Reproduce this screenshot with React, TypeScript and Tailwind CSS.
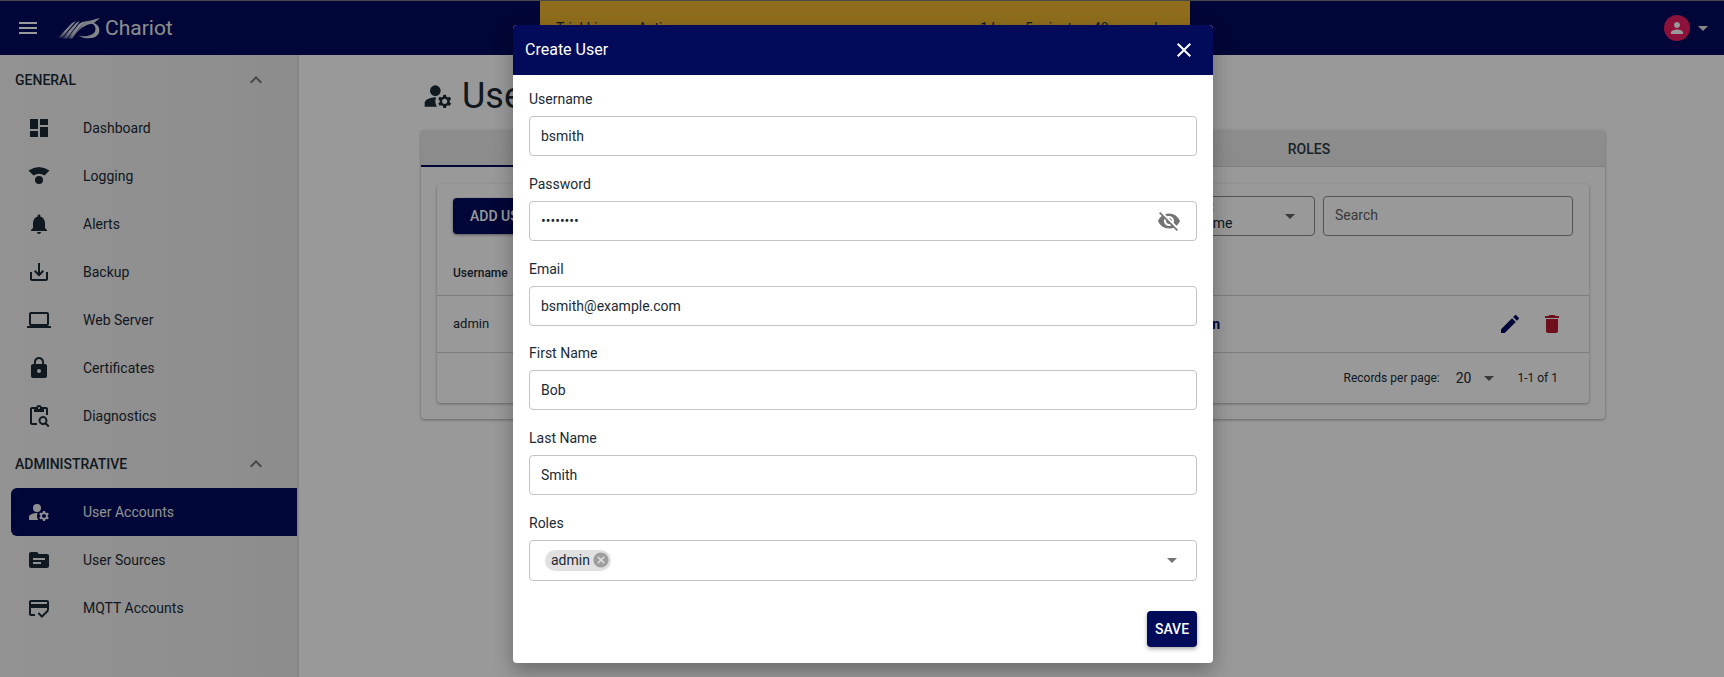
import React from "react";

const P = {
  menu: "M3 18h18v-2H3v2zm0-5h18v-2H3v2zm0-7v2h18V6H3z",
  less: "M12 8l-6 6 1.41 1.41L12 10.83l4.59 4.58L18 14z",
  dashboard: "M3 13h8V3H3v10zm0 8h8v-6H3v6zm10 0h8V11h-8v10zm0-18v6h8V3h-8z",
  logging: "M1.5 6.5Q12 -0.5 22.500 6.500L17.500 11.500Q12 8 6.500 11.500ZM12 12a4 4 0 1 0 0 8a4 4 0 1 0 0-8z",
  bell: "M12 22c1.1 0 2-.9 2-2h-4c0 1.1.89 2 2 2zm6-6v-5c0-3.07-1.64-5.64-4.5-6.32V4c0-.83-.67-1.5-1.5-1.500s-1.500.67-1.500 1.500v.68C7.630 5.360 6 7.920 6 11v5l-2 2v1h16v-1l-2-2z",
  backup: "M19 12v7H5v-7H3v7c0 1.100.9 2 2 2h14c1.100 0 2-.9 2-2v-7h-2zm-6 .67l2.590-2.580L17 11.500l-5 5-5-5 1.410-1.410L11 12.670V3h2z",
  laptop: "M20 18c1.100 0 1.990-.9 1.990-2L22 6c0-1.100-.9-2-2-2H4c-1.100 0-2 .9-2 2v10c0 1.100.9 2 2 2H0v2h24v-2h-4zM4 6h16v10H4V6z",
  lock: "M18 8h-1V6c0-2.760-2.240-5-5-5S7 3.240 7 6v2H6c-1.100 0-2 .9-2 2v10c0 1.100.9 2 2 2h12c1.100 0 2-.9 2-2V10c0-1.100-.9-2-2-2zm-6 9c-1.100 0-2-.9-2-2s.9-2 2-2 2 .9 2 2-.9 2-2 2zm3.100-9H8.900V6c0-1.710 1.390-3.100 3.100-3.100 1.710 0 3.100 1.390 3.100 3.100v2z",
  diag: "M5 3h4.200C9.600 1.800 10.700 1 12 1s2.400.8 2.800 2H19c1.100 0 2 .9 2 2v6h-2V5h-2v3H7V5H5v14h5v2H5c-1.100 0-2-.9-2-2V5c0-1.100.9-2 2-2zm7 0a1 1 0 1 0 0 2a1 1 0 0 0 0-2zM16 12a4.500 4.500 0 0 1 3.700 7l2.800 2.800-1.400 1.400-2.800-2.800A4.500 4.500 0 1 1 16 12zm0 2a2.500 2.500 0 1 0 0 5a2.500 2.500 0 0 0 0-5z",
  accountA: "M10.670 13.020c-.22-.01-.44-.02-.67-.02-2.420 0-4.680.67-6.610 1.820-.88.52-1.390 1.500-1.390 2.530V20h9.260c-.79-1.130-1.260-2.510-1.260-4 0-1.070.25-2.070.67-2.980zM10 4a4 4 0 1 0 0 8a4 4 0 1 0 0-8z",
  accountB: "M20.750 16c0-.22-.03-.42-.06-.63l1.140-1.010-1-1.730-1.450.49c-.32-.27-.68-.48-1.080-.63L18 11h-2l-.3 1.490c-.4.15-.76.36-1.080.63l-1.450-.49-1 1.730 1.140 1.010c-.03.21-.06.41-.06.63s.03.42.06.63l-1.140 1.010 1 1.730 1.450-.49c.32.27.68.48 1.080.63L16 21h2l.3-1.490c.4-.15.76-.36 1.080-.63l1.450.49 1-1.730-1.140-1.010c.03-.21.06-.41.06-.63zM17 18c-1.100 0-2-.9-2-2s.9-2 2-2 2 .9 2 2-.9 2-2 2z",
  source: "M20 6h-8l-2-2H4c-1.100 0-1.990.9-1.990 2L2 18c0 1.100.9 2 2 2h16c1.100 0 2-.9 2-2V8c0-1.100-.9-2-2-2zm-6 10H6v-2h8v2zm4-4H6v-2h12v2z",
  score: "M20 4H4c-1.110 0-2 .89-2 2v12c0 1.110.89 2 2 2h4v-2H4v-6h16v2h2V6c0-1.110-.89-2-2-2zm0 4H4V6h16v2zm-5.070 11.170l-2.830-2.830-1.410 1.410L14.930 22 22 14.930l-1.410-1.410-5.660 5.650z",
  person: "M12 12c2.210 0 4-1.790 4-4s-1.790-4-4-4-4 1.790-4 4 1.790 4 4 4zm0 2c-2.670 0-8 1.340-8 4v2h16v-2c0-2.660-5.330-4-8-4z",
  close: "M19 6.410L17.590 5 12 10.590 6.410 5 5 6.410 10.590 12 5 17.590 6.410 19 12 13.410 17.590 19 19 17.590 13.410 12z",
  eyeOff: "M12 7c2.760 0 5 2.240 5 5 0 .65-.13 1.260-.36 1.830l2.920 2.920c1.510-1.260 2.700-2.890 3.430-4.750-1.730-4.390-6-7.500-11-7.500-1.400 0-2.740.25-3.980.7l2.160 2.160C10.740 7.130 11.350 7 12 7zM2 4.270l2.280 2.280.46.46C3.080 8.300 1.780 10.020 1 12c1.730 4.390 6 7.500 11 7.500 1.550 0 3.030-.3 4.380-.84l.42.42L19.730 22 21 20.730 3.270 3 2 4.270zM7.530 9.800l1.550 1.550c-.05.21-.08.43-.08.65 0 1.660 1.340 3 3 3 .22 0 .44-.03.65-.08l1.550 1.550c-.67.33-1.410.53-2.200.53-2.760 0-5-2.240-5-5 0-.79.2-1.530.53-2.200zm4.310-.78l3.150 3.150.02-.16c0-1.660-1.340-3-3-3l-.17.01z",
  cancel: "M12 2C6.470 2 2 6.470 2 12s4.470 10 10 10 10-4.470 10-10S17.530 2 12 2zm5 13.590L15.590 17 12 13.410 8.410 17 7 15.590 10.590 12 7 8.410 8.410 7 12 10.590 15.590 7 17 8.410 13.410 12 17 15.590z",
  edit: "M3 17.250V21h3.750L17.810 9.940l-3.750-3.750L3 17.250zM20.710 7.040c.39-.39.39-1.020 0-1.410l-2.340-2.340c-.39-.39-1.020-.39-1.410 0l-1.830 1.830 3.750 3.750 1.830-1.830z",
  del: "M6 19c0 1.100.9 2 2 2h8c1.100 0 2-.9 2-2V7H6v12zM19 4h-3.500l-1-1h-5l-1 1H5v2h14V4z",
  drop: "M7 10l5 5 5-5z",
};

function Icon({ d, className }: { d: string | string[]; className?: string }) {
  const list = Array.isArray(d) ? d : [d];
  return (
    <svg viewBox="0 0 24 24" fill="currentColor" className={className}>
      {list.map((x) => (
        <path key={x} d={x} />
      ))}
    </svg>
  );
}

function Logo() {
  return (
    <svg viewBox="0 0 42 21" className="h-[21px] w-[42px]">
      <defs>
        <linearGradient id="lg" x1="0" x2="1" y1="0" y2="0">
          <stop offset="0" stopColor="#ffffff" stopOpacity="0.1" />
          <stop offset="0.4" stopColor="#ffffff" stopOpacity="0.8" />
          <stop offset="1" stopColor="#ffffff" stopOpacity="0.9" />
        </linearGradient>
      </defs>
      <g fill="url(#lg)">
        <path d="M0 19.500 L14 5 L18 3 L4 19.500Z" />
        <path d="M4 20.500 L18 5 L22 3 L8.500 20.500Z" />
        <path d="M9 20.500 L21 6 L25 4 L14 20.500Z" />
        <path d="M14 20.500 C19 15 22 10 29 7 C33 5.500 35 6 36 7 C38 9 38 13 36 15 C33 18 27 19 20 17.500 C25 20.500 31 21 36 19.500 C41 17.500 42 13 41 10 C40 7 38 6 36 5 L42 0 C35 2 30 3 24 4 C20 7 18 14 14 20.500Z" />
      </g>
    </svg>
  );
}

const general = [
  ["Dashboard", P.dashboard],
  ["Logging", P.logging],
  ["Alerts", P.bell],
  ["Backup", P.backup],
  ["Web Server", P.laptop],
  ["Certificates", P.lock],
  ["Diagnostics", P.diag],
] as const;

const admin = [
  ["User Accounts", [P.accountA, P.accountB], true],
  ["User Sources", P.source, false],
  ["MQTT Accounts", P.score, false],
] as const;

function SectionHead({ label }: { label: string }) {
  return (
    <div className="flex h-12 items-center justify-between pl-[15px] pr-[29px] text-sm font-medium text-[#1a2a35]">
      <span>{label}</span>
      <Icon d={P.less} className="h-6 w-6 text-[#757575]" />
    </div>
  );
}

function NavItem({ label, d, active }: { label: string; d: string | readonly string[]; active?: boolean }) {
  return (
    <div
      className={
        "ml-[11px] flex h-12 items-center rounded-l-md pl-4 text-sm " +
        (active ? "bg-[#000a5c] text-[#f0f0f0]" : "text-[#1a2a35]")
      }
    >
      <Icon d={d as string[]} className="h-6 w-6 shrink-0" />
      <span className="ml-[32px]">{label}</span>
    </div>
  );
}

function Field({ label, value, type, children }: { label: string; value: string; type?: string; children?: React.ReactNode }) {
  return (
    <div className="flex flex-col">
      <label className="mb-[7px] h-5 text-sm leading-5 text-[#1a2a35]">{label}</label>
      <div className="flex h-10 items-center rounded border border-[#c4c4c4] pl-[11px] pr-[15px]">
        <input
          readOnly
          type={type ?? "text"}
          value={value}
          className="min-w-0 flex-1 bg-transparent text-sm text-[#1a2a35] outline-none"
        />
        {children}
      </div>
    </div>
  );
}

export default function App() {
  return (
    <div className="relative flex h-screen w-full flex-col overflow-hidden bg-white font-['Roboto',sans-serif] text-[#1a2a35]">
      {/* top bar */}
      <header className="relative flex h-[55px] shrink-0 items-center justify-between border-t border-[#7a7a7a] bg-[#000a5c] pl-4 pr-[9px] text-white">
        <div className="flex items-center">
          <Icon d={P.menu} className="h-6 w-6" />
          <div className="ml-[18px]">
            <Logo />
          </div>
          <span className="ml-[5px] text-[21px] leading-none text-[#ececec]">Chariot</span>
        </div>
        <div className="flex items-center">
          <div className="flex h-[26px] w-[26px] items-center justify-center rounded-full bg-[#e91e63]">
            <Icon d={P.person} className="h-[18px] w-[18px]" />
          </div>
          <Icon d={P.drop} className="ml-[1px] h-6 w-6 text-[#e0e0e0]" />
        </div>
        <div className="absolute left-[540px] top-0 flex h-[52px] w-[650px] justify-between rounded-b bg-[#eeb62f] pl-4 pr-[25px] pt-[17px] text-sm text-[#1a2a35]">
          <span>Trial License Active</span>
          <span>1 hour, 5 minutes, 48 seconds</span>
        </div>
      </header>

      <div className="flex min-h-0 flex-1">
        {/* sidebar */}
        <aside className="w-[299px] shrink-0 border-r-2 border-[#dedede] bg-linear-to-r from-[#f5f5f5] to-[#ebebeb] pt-[1px]">
          <SectionHead label="GENERAL" />
          {general.map(([l, d]) => (
            <NavItem key={l} label={l} d={d} />
          ))}
          <SectionHead label="ADMINISTRATIVE" />
          {admin.map(([l, d, a]) => (
            <NavItem key={l} label={l} d={d} active={a} />
          ))}
        </aside>

        {/* main */}
        <main className="min-w-0 flex-1 pl-[122px] pr-[119px]">
          <div className="flex h-[75px] items-center pl-[1px] pt-[6px]">
            <Icon d={[P.accountA, P.accountB]} className="h-8 w-8" />
            <h1 className="ml-[8px] text-[36px] font-normal leading-none">User Accounts</h1>
          </div>

          <section className="rounded bg-white shadow-[0_1px_3px_rgba(0,0,0,0.35)]">
            <div className="flex h-[37px] rounded-t bg-linear-to-b from-[#ececec] to-[#e8e8e8] text-sm font-medium">
              <div className="flex flex-1 items-center justify-center border-b-2 border-[#000a5c]">USERS</div>
              <div className="flex flex-1 items-center justify-center border-b border-[#d8d8d8] pt-[1px] text-[#2c3a42]">ROLES</div>
            </div>

            <div className="p-4 pt-[17px]">
              <div className="rounded bg-white shadow-[0_1px_3px_rgba(0,0,0,0.35)]">
                <div className="flex items-start px-4 pt-[12px]">
                  <button className="mt-[2px] h-9 rounded bg-[#000a5c] px-[17px] text-sm font-medium text-white shadow-[0_1px_3px_rgba(0,0,0,0.4)]">
                    ADD USER
                  </button>
                  <div className="ml-auto flex gap-2">
                    <div className="relative h-[40px] w-[157px] rounded border border-[#8a8a8a] pl-[10px] text-sm">
                      <div className="pt-[2px] text-xs leading-4 text-[#555]">Filter by:</div>
                      <div className="-mt-[2px] leading-5">Username</div>
                      <Icon d={P.drop} className="absolute right-[12px] top-[7px] h-6 w-6 text-[#616161]" />
                    </div>
                    <input
                      readOnly
                      placeholder="Search"
                      className="h-[40px] w-[250px] rounded border border-[#8a8a8a] bg-transparent px-[11px] pb-[3px] text-sm outline-none placeholder:text-[#616161]"
                    />
                  </div>
                </div>

                <div className="mt-[21px] flex h-[39px] items-center border-b border-[#d0d0d0] px-4 pb-[6px] text-xs font-medium">
                  <span className="w-[728px]">Username</span>
                  <span>Roles</span>
                </div>
                <div className="flex h-[57px] items-center border-b border-[#d0d0d0] pl-4 pr-[25px] text-[13px]">
                  <span className="w-[728px]">admin</span>
                  <span className="text-sm font-bold text-[#000a5c]">admin</span>
                  <Icon d={P.edit} className="ml-auto h-6 w-6 text-[#000a5c]" />
                  <Icon d={P.del} className="ml-[18px] h-6 w-6 text-[#b71c2e]" />
                </div>
                <div className="flex h-[50px] items-center justify-end pr-[31px] text-xs">
                  <span>Records per page:</span>
                  <span className="ml-4 text-sm">20</span>
                  <Icon d={P.drop} className="ml-[6px] h-6 w-6 text-[#616161]" />
                  <span className="ml-[16px]">1-1 of 1</span>
                </div>
              </div>
            </div>
          </section>
        </main>
      </div>

      {/* backdrop */}
      <div className="absolute inset-0 bg-black/40" />

      {/* dialog */}
      <div className="absolute left-[513px] top-[25px] flex h-[638px] w-[700px] flex-col overflow-hidden rounded bg-white shadow-[0_8px_20px_rgba(0,0,0,0.3)]">
        <div className="flex h-[50px] shrink-0 items-center justify-between bg-[#020a5a] pl-3 pr-[17px] text-white">
          <span className="text-base">Create User</span>
          <Icon d={P.close} className="h-6 w-6" />
        </div>
        <div className="flex flex-1 flex-col gap-[17.8px] px-4 pt-[14px]">
          <Field label="Username" value="bsmith" />
          <Field label="Password" value="password" type="password">
            <Icon d={P.eyeOff} className="h-6 w-6 text-[#757575]" />
          </Field>
          <Field label="Email" value="bsmith@example.com" />
          <Field label="First Name" value="Bob" />
          <Field label="Last Name" value="Smith" />
          <div className="flex flex-col">
            <label className="mb-[7px] h-5 text-sm leading-5 text-[#1a2a35]">Roles</label>
            <div className="flex h-[41px] items-center justify-between rounded border border-[#c4c4c4] pl-[15px] pr-[12px]">
              <div className="flex h-[21px] items-center rounded-full bg-[#e0e0e0] pl-[6px] pr-[1px] text-sm text-[#1a2a35]">
                admin
                <Icon d={P.cancel} className="ml-[2px] h-[18px] w-[18px] text-[#9e9e9e]" />
              </div>
              <Icon d={P.drop} className="h-6 w-6 text-[#757575]" />
            </div>
          </div>
          <div className="mt-[12px] flex justify-end">
            <button className="h-9 w-[50px] rounded bg-[#020a5a] text-sm font-medium text-white shadow-[0_2px_4px_rgba(0,0,0,0.35)]">
              SAVE
            </button>
          </div>
        </div>
      </div>
    </div>
  );
}
